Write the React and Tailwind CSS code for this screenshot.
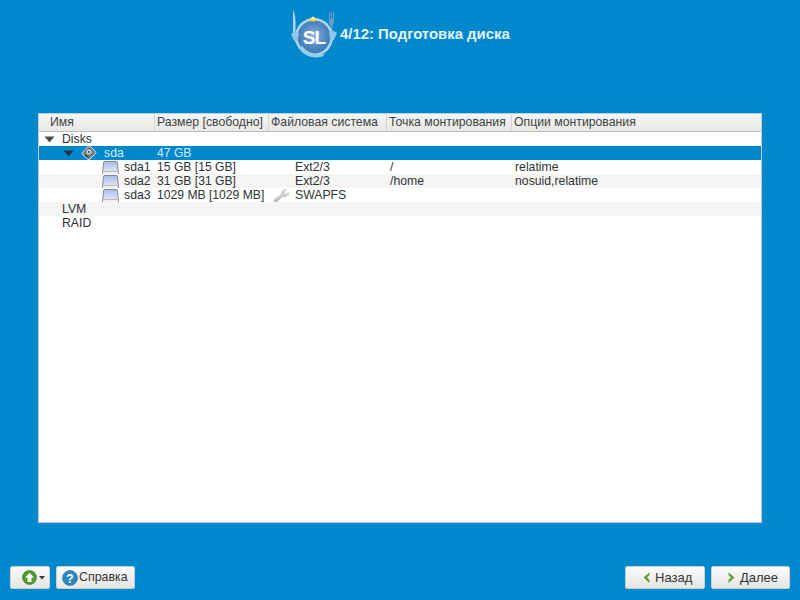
import React from "react";

const COLS = "grid grid-cols-[115px_114px_118px_125px_1fr] grid-rows-[14px]";

function Logo() {
  return (
    <svg width="50" height="54" viewBox="0 0 50 54" className="block">
      <defs>
        <radialGradient id="plate" cx="50%" cy="45%" r="60%">
          <stop offset="0%" stopColor="#8fb2da" />
          <stop offset="60%" stopColor="#4f87c1" />
          <stop offset="100%" stopColor="#3a78b6" />
        </radialGradient>
      </defs>
      {/* knife and fork */}
      <path d="M5 2 C7.5 6 8 14 7.5 20 L7.5 28 L5 28 Z" fill="#a9d4ef" />
      <path d="M41 4 L41 13 Q41 16 42.5 17 L42.5 26 L44.5 26 L44.5 17 Q46 16 46 13 L46 4 L45 4 L45 11 L44 11 L44 4 L43 4 L43 11 L42 11 L42 4 Z" fill="#6f9cc2" />
      {/* plate */}
      <circle cx="26" cy="29" r="19" fill="#b3d6ee" />
      <circle cx="26" cy="29" r="16.5" fill="url(#plate)" />
      {/* yellow cap */}
      <path d="M19 12.5 L25 8.5 L30 12 L26 13.5 Z" fill="#efd75c" />
      <path d="M22 11 L25 8.5 L28 11 Z" fill="#f9f1b0" />
      {/* side pieces */}
      <path d="M3 26 Q8 22 11 25 Q10 32 8 35 Q5 32 3 26 Z" fill="#8fc6ea" />
      <path d="M49 25 Q44 21 41 24 Q42 31 44 34 Q47 31 49 25 Z" fill="#8fc6ea" />
      <path d="M11 40 Q16 49 28 49.5 Q35 49.5 37 46 Q22 48 14 38 Z" fill="#9acced" />
      <text x="26" y="36" textAnchor="middle" fill="#ffffff" fontFamily="'Liberation Sans', sans-serif" fontWeight="700" fontSize="19" letterSpacing="-1">SL</text>
    </svg>
  );
}

function Arrow({ dark }) {
  return (
    <svg width="11" height="7" viewBox="0 0 11 7" className="block shrink-0">
      <path d="M0.5 0.5 H10.5 L5.5 6.5 Z" fill={dark ? "#24343e" : "#4a4d4e"} />
    </svg>
  );
}

function DiskIcon() {
  return (
    <svg width="16" height="16" viewBox="0 0 16 16" className="block shrink-0 -my-[1px]">
      <path d="M7.5 1 Q8.5 0.6 9.5 1.5 L14.5 6.5 Q15.5 7.5 14.5 8.8 L9 14 Q8 15 7 14.2 L1.5 9.5 Q0.6 8.5 1.5 7.5 Z" fill="#74878f" stroke="#d5e0e4" strokeWidth="1" />
      <circle cx="8" cy="7" r="3.4" fill="#c3d0d6" stroke="#33424a" strokeWidth="0.8" />
      <circle cx="8" cy="7" r="0.9" fill="#33424a" />
      <path d="M4 10 L7.5 12.8" stroke="#26343a" strokeWidth="1.2" />
    </svg>
  );
}

function PartIcon() {
  return (
    <svg width="17" height="15" viewBox="0 0 17 15" className="block shrink-0 mt-[1px] -mb-[2px]">
      <defs>
        <linearGradient id="part" x1="0" y1="0" x2="0" y2="1">
          <stop offset="0%" stopColor="#a9bdec" />
          <stop offset="60%" stopColor="#d5dff3" />
          <stop offset="100%" stopColor="#f5f6f7" />
        </linearGradient>
      </defs>
      <path d="M1.5 1.5 Q1.5 0.5 3 0.5 H14 Q15.5 0.5 15.5 1.5 L16.5 13 Q16.5 14.5 15 14.5 H2 Q0.5 14.5 0.5 13 Z" fill="url(#part)" stroke="#6a757d" strokeWidth="0.8" />
      <path d="M1.2 10.5 H15.8" stroke="#b7bdc2" strokeWidth="1" />
      <path d="M1.2 11 H15.8 V14 H1.2 Z" fill="#f0f0f0" />
    </svg>
  );
}

function WrenchIcon() {
  return (
    <svg width="17" height="15" viewBox="0 0 17 15" className="block -mb-[1px]">
      <defs>
        <linearGradient id="wrench" x1="0" y1="1" x2="1" y2="0">
          <stop offset="0%" stopColor="#b8b8b6" />
          <stop offset="100%" stopColor="#e2e2e0" />
        </linearGradient>
      </defs>
      <path d="M1 14 Q0 13 1.5 11.5 L8 6.5 Q8 2.5 11 1.5 Q13 1 14 1.5 L11.5 4 L13 6 L16 4.5 Q16 7.5 13.5 8.5 Q11.5 9.5 9.5 8.5 L4 14 Q2 15 1 14 Z" fill="url(#wrench)" stroke="#bdbdbb" strokeWidth="0.4" />
    </svg>
  );
}

function HeaderCell({ children, className }) {
  return (
    <div className={`h-full flex items-center overflow-hidden whitespace-nowrap ${className}`}>
      {children}
    </div>
  );
}

function Row({ shaded, selected, name, size, fs, mount, opts, pad = "pl-0", icon, wrench }) {
  const bg = selected ? "bg-[#0088cc] text-[#cfeefb]" : shaded ? "bg-[#f6f5f3]" : "bg-white";
  return (
    <div className={`${COLS} h-[14px] leading-[14px] whitespace-nowrap ${bg}`}>
      <div className={`flex items-center h-[14px] ${pad}`}>{icon}{name}</div>
      <div className="pl-[3px] text-[12.15px]">{size}</div>
      <div className="pl-[5px] flex items-center h-[14px]">
        <span className="w-[22px] shrink-0 h-[14px]">{wrench}</span>
        <span>{fs}</span>
      </div>
      <div className="pl-[4px]">{mount}</div>
      <div className="pl-[4px]">{opts}</div>
    </div>
  );
}

function Button({ children, className }) {
  return (
    <div className={`h-[23px] rounded-[2px] border border-[#c8d0d4] bg-gradient-to-b from-[#fbfbfa] to-[#e6e5e2] flex items-center text-[#2e3436] ${className}`}>
      {children}
    </div>
  );
}

export default function App() {
  return (
    <div className="w-[800px] h-[600px] bg-[#0088cc] flex flex-col font-['Liberation_Sans',sans-serif] text-[12.25px] text-[#2e3436] overflow-hidden">
      <div className="h-[113px] shrink-0 pt-[8px] pl-[288px] flex items-start">
        <Logo />
        <h1 className="ml-[2px] mt-[18px] text-[14.9px] leading-[16px] font-bold text-[#e4f4fc]">4/12: Подготовка диска</h1>
      </div>

      <div className="mx-[38px] h-[410px] shrink-0 bg-white border border-[#c4ccd0] flex flex-col">
        <div className="grid grid-cols-[115px_114px_118px_125px_1fr] h-[18px] shrink-0 bg-gradient-to-b from-[#f6f6f4] to-[#e9e8e5] border-b border-[#bdbdb9] text-[#3c4245]">
          <HeaderCell className="pl-[11px]">Имя</HeaderCell>
          <HeaderCell className="pl-[2px] border-l border-[#d4d4d0]">Размер [свободно]</HeaderCell>
          <HeaderCell className="pl-[2px] border-l border-[#d4d4d0]">Файловая система</HeaderCell>
          <HeaderCell className="pl-[2px] border-l border-[#d4d4d0]">Точка монтирования</HeaderCell>
          <HeaderCell className="pl-[2px] border-l border-[#d4d4d0]">Опции монтирования</HeaderCell>
        </div>
        <Row name="Disks" pad="pl-[5px]" icon={<span className="mr-[7px]"><Arrow /></span>} />
        <Row
          selected
          name="sda"
          size="47 GB"
          pad="pl-[24px]"
          icon={<span className="flex items-center mr-[7px] gap-[7px]"><Arrow dark /><DiskIcon /></span>}
        />
        <Row name="sda1" size="15 GB [15 GB]" fs="Ext2/3" mount="/" opts="relatime" pad="pl-[63px]" icon={<span className="mr-[5px]"><PartIcon /></span>} />
        <Row shaded name="sda2" size="31 GB [31 GB]" fs="Ext2/3" mount="/home" opts="nosuid,relatime" pad="pl-[63px]" icon={<span className="mr-[5px]"><PartIcon /></span>} />
        <Row name="sda3" size="1029 MB [1029 MB]" fs="SWAPFS" pad="pl-[63px]" icon={<span className="mr-[5px]"><PartIcon /></span>} wrench={<WrenchIcon />} />
        <Row shaded name="LVM" pad="pl-[23px]" />
        <Row name="RAID" pad="pl-[23px]" />
      </div>

      <div className="flex justify-between px-[10px] pt-[43px]">
        <div className="flex gap-[6px]">
          <Button className="w-[40px] pl-[11px] gap-[2px]">
            <svg width="15" height="15" viewBox="0 0 15 15" className="block">
              <circle cx="7.5" cy="7.5" r="7" fill="#4f9a2e" stroke="#3a7a22" strokeWidth="0.6" />
              <path d="M7.5 2.8 L12 7.6 H9.5 V12 H5.5 V7.6 H3 Z" fill="#ffffff" />
            </svg>
            <svg width="6" height="4" viewBox="0 0 6 4" className="block">
              <path d="M0 0 H6 L3 3.5 Z" fill="#3a3a3a" />
            </svg>
          </Button>
          <Button className="w-[79px] pl-[5px] gap-[1px]">
            <svg width="16" height="16" viewBox="0 0 16 16" className="block shrink-0">
              <circle cx="8" cy="8" r="7.5" fill="#2f86c4" stroke="#1d6aa5" strokeWidth="0.6" />
              <text x="8" y="12.5" textAnchor="middle" fill="#ffffff" fontSize="12" fontWeight="700" fontFamily="'Liberation Sans', sans-serif">?</text>
            </svg>
            <span className="text-[12.4px]">Справка</span>
          </Button>
        </div>
        <div className="flex gap-[6px]">
          <Button className="w-[80px] pl-[17px] gap-[5px]">
            <svg width="7" height="12" viewBox="0 0 7 12" className="block">
              <path d="M6.5 0.5 L0.5 5.5 L6.5 11 L6.5 8 L4 5.5 L6.5 3 Z" fill="#5a9e34" />
            </svg>
            <span className="text-[13px]">Назад</span>
          </Button>
          <Button className="w-[79px] pl-[16px] gap-[5px]">
            <svg width="7" height="12" viewBox="0 0 7 12" className="block">
              <path d="M0.5 0.5 L6.5 5.5 L0.5 11 L0.5 8 L3 5.5 L0.5 3 Z" fill="#5a9e34" />
            </svg>
            <span className="text-[13px]">Далее</span>
          </Button>
        </div>
      </div>
    </div>
  );
}
